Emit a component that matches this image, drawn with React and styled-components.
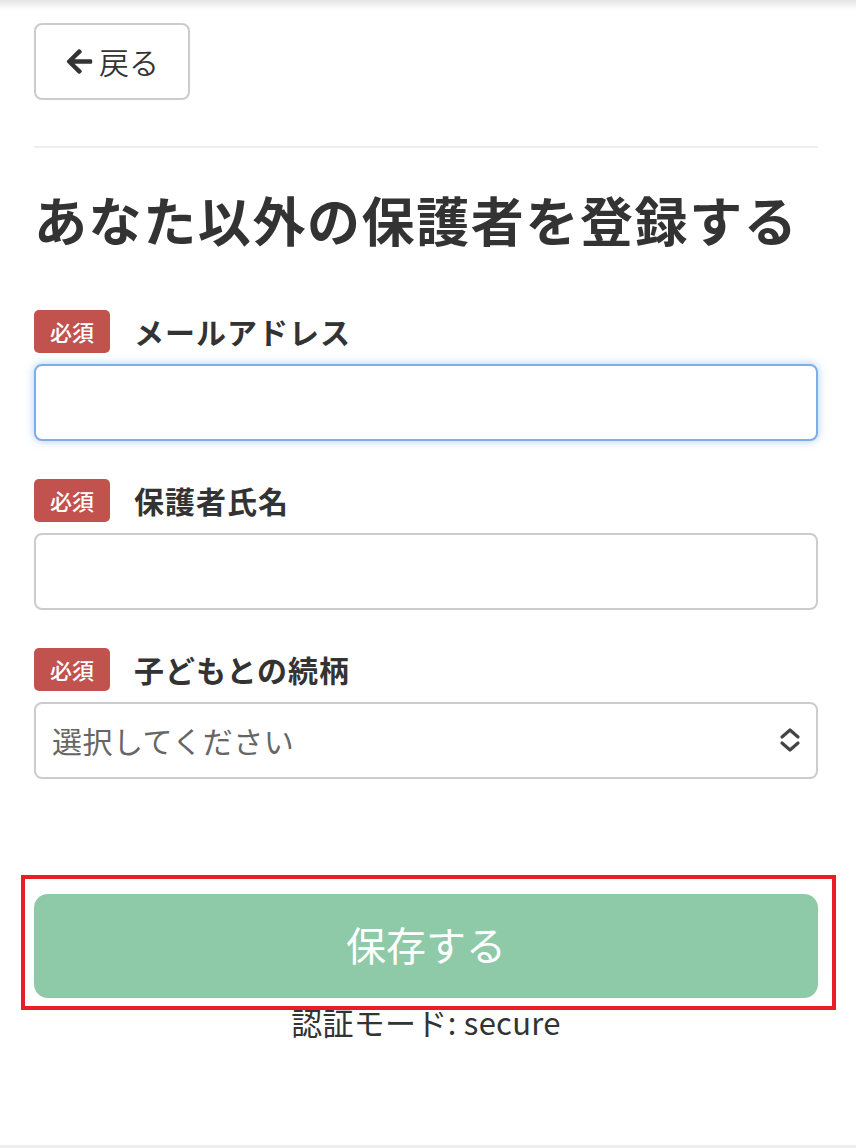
import React from "react";
import styled, { createGlobalStyle } from "styled-components";
import { FaArrowLeft } from "react-icons/fa";

const Global = createGlobalStyle`
  html, body { margin: 0; padding: 0; background: #fff; }
  body {
    font-family: "Noto Sans CJK JP", "Noto Sans", sans-serif;
    color: #333;
  }
  * { box-sizing: border-box; }
`;

const Page = styled.div`
  min-height: 100vh;
  display: flex;
  flex-direction: column;
`;

const TopShade = styled.div`
  height: 10px;
  background: linear-gradient(rgba(0, 0, 0, 0.1), rgba(0, 0, 0, 0));
`;

const Content = styled.main`
  padding: 0 38px 0 34px;
  display: flex;
  flex-direction: column;
`;

const BackButton = styled.button`
  margin-top: 13px;
  width: 156px;
  height: 77px;
  display: flex;
  align-items: center;
  justify-content: center;
  gap: 5px;
  background: #fff;
  border: 2px solid #ccc;
  border-radius: 8px;
  font-family: inherit;
  font-size: 30px;
  font-weight: 350;
  color: #333;
  padding: 0 0 2px 0;
  svg { width: 29px; height: 29px; margin-top: 1px; }
`;

const Divider = styled.hr`
  margin: 46px 0 0 0;
  border: none;
  height: 2px;
  background: #eee;
`;

const Heading = styled.h1`
  margin: 40px 0 0 0;
  font-size: 53px;
  line-height: 1.2;
  font-weight: 700;
  color: #333;
  letter-spacing: 1.6px;
`;

const Form = styled.form`
  margin-top: 58px;
  display: flex;
  flex-direction: column;
  gap: 38px;
`;

const Field = styled.div`
  display: flex;
  flex-direction: column;
  gap: 11px;
`;

const LabelRow = styled.div`
  display: flex;
  align-items: center;
  gap: 24px;
`;

const Badge = styled.span`
  width: 76px;
  height: 43px;
  display: inline-flex;
  align-items: center;
  justify-content: center;
  background: #c1524e;
  color: #fff;
  border-radius: 5px;
  font-size: 22px;
  font-weight: 500;
`;

const Label = styled.label`
  font-size: 30px;
  font-weight: 700;
  color: #333;
  line-height: 1.2;
  letter-spacing: 1px;
`;

const TextInput = styled.input`
  width: 100%;
  height: 77px;
  border: 2px solid ${(p) => (p.$focused ? "#7eaee6" : "#ccc")};
  border-radius: 8px;
  font-family: inherit;
  font-size: 30px;
  padding: 0 16px;
  outline: none;
  box-shadow: ${(p) => (p.$focused ? "0 0 9px rgba(102, 160, 233, 0.55)" : "none")};
`;

const SelectWrap = styled.div`
  position: relative;
`;

const Select = styled.select`
  width: 100%;
  height: 77px;
  border: 2px solid #ccc;
  border-radius: 8px;
  font-family: inherit;
  font-size: 30px;
  color: #666;
  padding: 0 60px 0 16px;
  background: #fff;
  appearance: none;
  -webkit-appearance: none;
  outline: none;
  letter-spacing: 0.5px;
`;

const Chevrons = styled.svg`
  position: absolute;
  right: 17px;
  top: 50%;
  transform: translateY(-50%);
  width: 22px;
  height: 26px;
  pointer-events: none;
`;

const SubmitArea = styled.div`
  position: relative;
  margin-top: 115px;
  &::after {
    content: "";
    position: absolute;
    left: -13px;
    right: -18px;
    top: -19px;
    bottom: -12px;
    border: 4px solid #e91d25;
    pointer-events: none;
  }
`;

const SaveButton = styled.button`
  width: 100%;
  height: 104px;
  border: none;
  border-radius: 14px;
  background: #8ecaa8;
  color: #fff;
  font-family: inherit;
  font-size: 40px;
  font-weight: 400;
  padding: 0 0 4px 0;
`;

const AuthMode = styled.p`
  margin: 5px 0 0 0;
  text-align: center;
  font-size: 31px;
  line-height: 1.2;
  color: #333;
  letter-spacing: 0.3px;
`;

const BottomEdge = styled.div`
  margin-top: auto;
  height: 3px;
  background: #eee;
`;

export default function App() {
  return (
    <>
      <Global />
      <Page>
        <TopShade />
        <Content>
          <div>
            <BackButton type="button">
              <FaArrowLeft />
              <span>戻る</span>
            </BackButton>
          </div>
          <Divider />
          <Heading>あなた以外の保護者を登録する</Heading>
          <Form onSubmit={(e) => e.preventDefault()}>
            <Field>
              <LabelRow>
                <Badge>必須</Badge>
                <Label htmlFor="email">メールアドレス</Label>
              </LabelRow>
              <TextInput id="email" type="email" $focused />
            </Field>
            <Field>
              <LabelRow>
                <Badge>必須</Badge>
                <Label htmlFor="name">保護者氏名</Label>
              </LabelRow>
              <TextInput id="name" type="text" />
            </Field>
            <Field>
              <LabelRow>
                <Badge>必須</Badge>
                <Label htmlFor="rel">子どもとの続柄</Label>
              </LabelRow>
              <SelectWrap>
                <Select id="rel" defaultValue="">
                  <option value="">選択してください</option>
                  <option value="father">父</option>
                  <option value="mother">母</option>
                </Select>
                <Chevrons viewBox="0 0 22 26" fill="none" stroke="#444" strokeWidth="3.2" strokeLinecap="round" strokeLinejoin="round">
                  <path d="M3 10 L11 3 L19 10" />
                  <path d="M3 16 L11 23 L19 16" />
                </Chevrons>
              </SelectWrap>
            </Field>
          </Form>
          <SubmitArea>
            <SaveButton type="button">保存する</SaveButton>
          </SubmitArea>
          <AuthMode>認証モード: secure</AuthMode>
        </Content>
        <BottomEdge />
      </Page>
    </>
  );
}
